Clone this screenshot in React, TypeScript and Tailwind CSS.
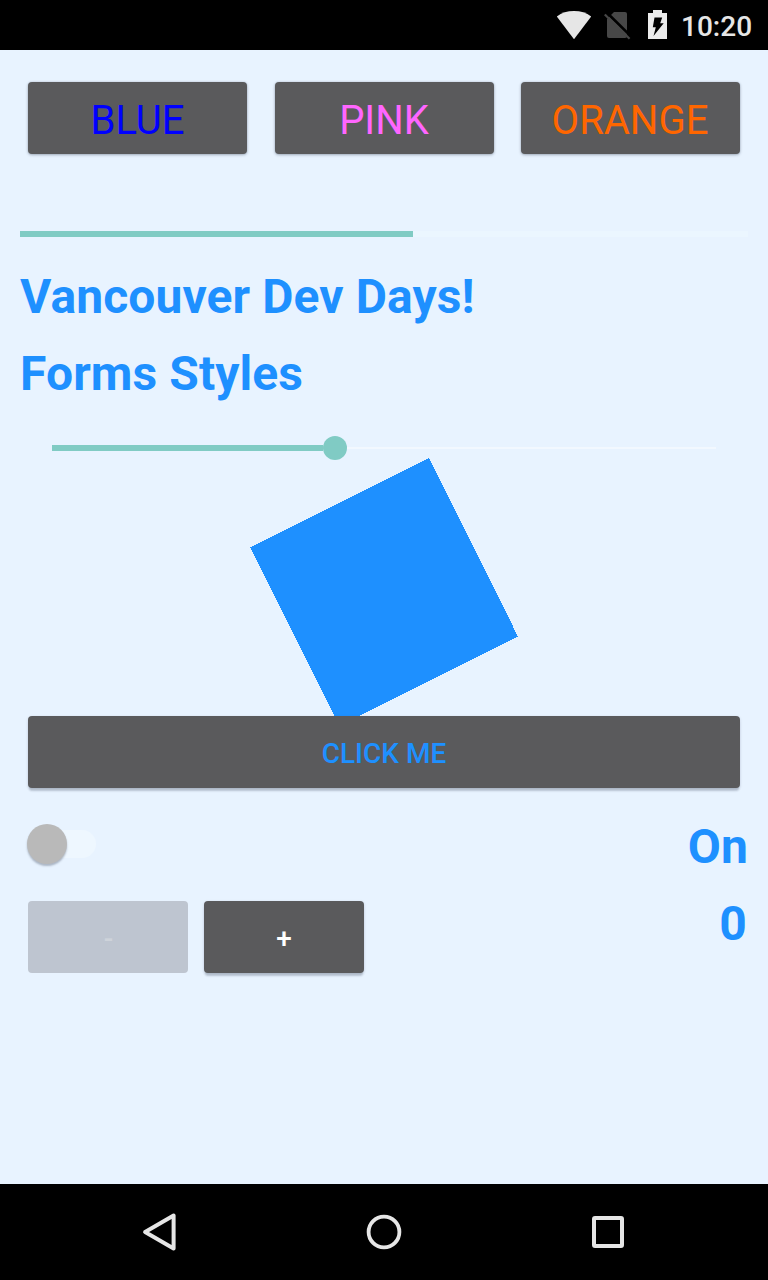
import React from "react";

const face = "rounded-[4px] bg-[#5a5a5c] flex items-center justify-center h-[72px]";
const raised = "shadow-[0_1px_3px_rgba(30,40,60,0.32),0_0_2px_rgba(30,40,60,0.15)]";
const lifted = "shadow-[0_4px_2px_-1px_rgba(60,70,90,0.24),0_1px_3px_rgba(60,70,90,0.2)]";
const label = "text-[48px] leading-[57px] font-bold tracking-[0.1px] text-[#1e90ff] whitespace-nowrap";

function StatusBar() {
  return (
    <header className="flex h-[50px] shrink-0 items-start bg-black pl-[556px] text-[#e6e6e6]">
      <svg className="mt-[10px]" width="36" height="30" viewBox="0 0 36 30" fill="#e6e6e6">
        <path d="M18 29.2 0.8 6.6C5.5 2.8 11.4 1 18 1s12.500 1.800 17.200 5.600z" />
      </svg>
      <svg className="ml-[11px] mt-[10px]" width="28" height="32" viewBox="0 0 28 32">
        <path d="M11 2H22a2 2 0 0 1 2 2V26a2 2 0 0 1-2 2H6a2 2 0 0 1-2-2V9z" fill="#474747" />
        <path d="M3.500 2.300 28 26.300" stroke="#000" strokeWidth="2.600" />
        <path d="M1.800 4.500 26.600 28.800" stroke="#474747" strokeWidth="2.200" />
      </svg>
      <svg className="ml-[17px] mt-[10px]" width="19" height="29" viewBox="0 0 19 29">
        <path d="M5 0h9v3h5v26H0V3h5z" fill="#ececec" />
        <path d="M6.500 7.500h7.700l-2 5.700H15.700L5.500 26l2.300-8.800H4.800z" fill="#000" />
      </svg>
      <span className="ml-[14px] mt-[10px] text-[28px] leading-[33px] font-medium">10:20</span>
    </header>
  );
}

function ColorButtons() {
  return (
    <div className="mx-[8px] mt-[32px] flex justify-between text-[40px] leading-[47px]">
      <button className={`${face} ${raised} w-[219px] pt-[4px] text-[#0000ff]`}>BLUE</button>
      <button className={`${face} ${raised} w-[219px] pt-[4px] text-[#ff66ff]`}>PINK</button>
      <button className={`${face} ${raised} w-[219px] pt-[4px] pr-[1px] text-[#ff6600]`}>ORANGE</button>
    </div>
  );
}

function Slider() {
  return (
    <div className="mx-[32px] mt-[34px] flex h-[24px] items-center">
      <div className="h-[6.600px] w-[271px] bg-[#80cbc4]" />
      <div className="h-[24px] w-[24px] rounded-full bg-[#80cbc4]" />
      <div className="h-[2px] flex-1 bg-[#f2f8ff]" />
    </div>
  );
}

function NavBar() {
  return (
    <nav className="flex h-[96px] shrink-0 items-center justify-between bg-black px-[136px]">
      <svg width="48" height="48" viewBox="0 0 48 48" fill="none" stroke="#e6e6e6" strokeWidth="4" strokeLinejoin="round">
        <path d="M37.600 7.500v33L9.100 24z" />
      </svg>
      <svg width="48" height="48" viewBox="0 0 48 48" fill="none" stroke="#e6e6e6" strokeWidth="3.800">
        <circle cx="24" cy="24" r="15.400" />
      </svg>
      <svg width="48" height="48" viewBox="0 0 48 48" fill="none" stroke="#e6e6e6" strokeWidth="4">
        <rect x="10" y="10" width="28" height="28" rx="1" />
      </svg>
    </nav>
  );
}

export default function App() {
  return (
    <div className="flex h-[1280px] w-[768px] flex-col overflow-hidden bg-[#e8f3ff] font-[Roboto,sans-serif]">
      <StatusBar />
      <main className="flex flex-1 flex-col px-[20px]">
        <ColorButtons />
        <div className="mt-[77px] h-[6px] bg-[#ebf6ff]">
          <div className="h-full w-[393px] bg-[#80cbc4]" />
        </div>
        <h1 className={`${label} mt-[31px]`}>Vancouver Dev Days!</h1>
        <h2 className={`${label} mt-[20px]`}>Forms Styles</h2>
        <Slider />
        <div className="-mt-[2px] flex h-[258px] justify-center overflow-hidden">
          <svg className="shrink-0" width="268" height="268" viewBox="0 0 268 268" shapeRendering="crispEdges">
            <path d="M179 0 268 178.500 89.500 268 0 89.500z" fill="#1e90ff" />
          </svg>
        </div>
        <button className={`${face} ${lifted} mx-[8px] pt-[3px] text-[28px] leading-[33px] font-medium text-[#1e90ff]`}>
          CLICK ME
        </button>
        <div className="mt-[30px] flex h-[57px] justify-between">
          <div className="ml-[7px] mt-[6px] flex h-[40px] items-center">
            <div className="z-10 h-[40px] w-[40px] rounded-full bg-[#b9b9b9] shadow-[0_2px_2px_rgba(60,70,90,0.35)]" />
            <div className="-ml-[27px] h-[28px] w-[56px] rounded-full bg-[#eef7ff]" />
          </div>
          <span className={label}>On</span>
        </div>
        <div className="mt-[20px] flex items-start justify-between">
          <div className="ml-[8px] mt-[6px] flex gap-[16px] text-[28px] leading-[33px] font-medium">
            <button className="flex h-[72px] w-[160px] items-center justify-center rounded-[4px] bg-[#bec5d0] pt-[3px] pl-[1px] text-[#ced3da]">
              -
            </button>
            <button className={`${face} ${lifted} w-[160px] pt-[3px] text-white`}>+</button>
          </div>
          <span className={`${label} mr-[1px]`}>0</span>
        </div>
      </main>
      <NavBar />
    </div>
  );
}
